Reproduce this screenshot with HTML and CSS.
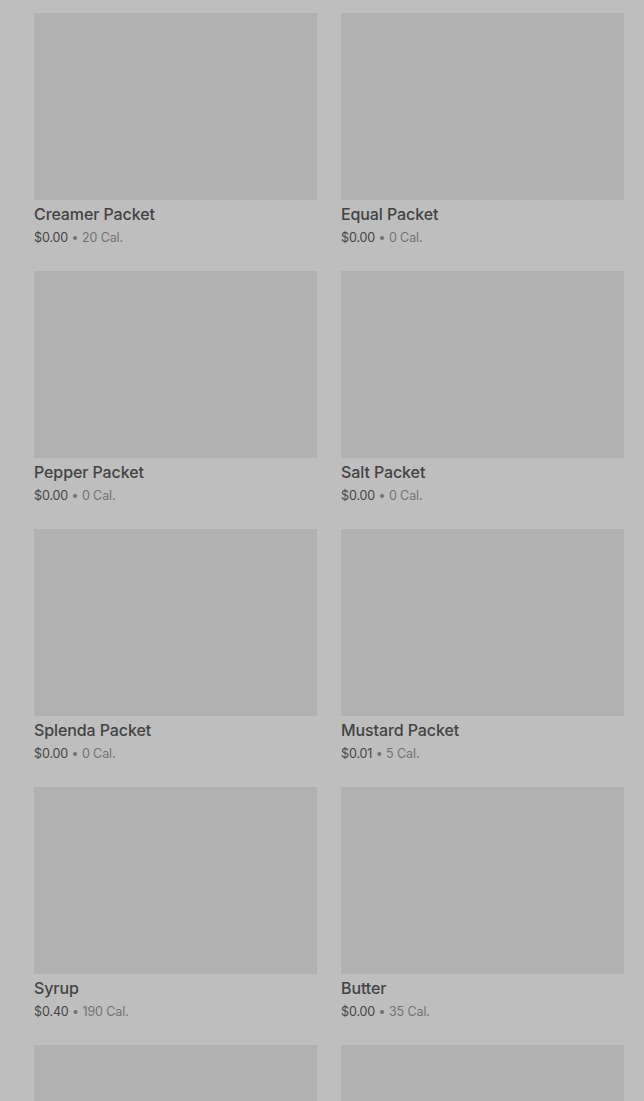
FILE: index.html
```html
<!DOCTYPE html>
<html lang="en">
<head>
  <meta charset="UTF-8">
  <title>Condiments</title>
  <meta name="viewport" content="width=device-width, initial-scale=1.0">
  <link rel="stylesheet" href="styles.css">
</head>
<body>
  <div class="grid">
    <div class="item">
      <div class="thumb"></div>
      <div class="name">Creamer Packet</div>
      <div class="meta"><span class="price">$0.00</span> • 20 Cal.</div>
    </div>
    <div class="item">
      <div class="thumb"></div>
      <div class="name">Equal Packet</div>
      <div class="meta"><span class="price">$0.00</span> • 0 Cal.</div>
    </div>
    <div class="item">
      <div class="thumb"></div>
      <div class="name">Pepper Packet</div>
      <div class="meta"><span class="price">$0.00</span> • 0 Cal.</div>
    </div>
    <div class="item">
      <div class="thumb"></div>
      <div class="name">Salt Packet</div>
      <div class="meta"><span class="price">$0.00</span> • 0 Cal.</div>
    </div>
    <div class="item">
      <div class="thumb"></div>
      <div class="name">Splenda Packet</div>
      <div class="meta"><span class="price">$0.00</span> • 0 Cal.</div>
    </div>
    <div class="item">
      <div class="thumb"></div>
      <div class="name">Mustard Packet</div>
      <div class="meta"><span class="price">$0.01</span> • 5 Cal.</div>
    </div>
    <div class="item">
      <div class="thumb"></div>
      <div class="name">Syrup</div>
      <div class="meta"><span class="price">$0.40</span> • 190 Cal.</div>
    </div>
    <div class="item">
      <div class="thumb"></div>
      <div class="name">Butter</div>
      <div class="meta"><span class="price">$0.00</span> • 35 Cal.</div>
    </div>
    <div class="item">
      <div class="thumb"></div>
    </div>
    <div class="item">
      <div class="thumb"></div>
    </div>
  </div>
</body>
</html>
```

FILE: styles.css
```css
body { margin: 0; background: #bebebe; font-family: Inter, "Noto Sans", Arial, sans-serif; color: #424242; }
.grid { display: grid; grid-template-columns: 283px 283px; column-gap: 24px; row-gap: 23px; padding: 13px 20px 40px 34px; }
.thumb { height: 187px; background: #b1b1b1; }
.name { margin-top: 3px; font-size: 16px; line-height: 22px; font-weight: 500; color: #434343; letter-spacing: -0.1px; }
.meta { margin-top: 3px; font-size: 12.5px; line-height: 20px; color: #737373; letter-spacing: -0.1px; }
.price { color: #454545; }
```
